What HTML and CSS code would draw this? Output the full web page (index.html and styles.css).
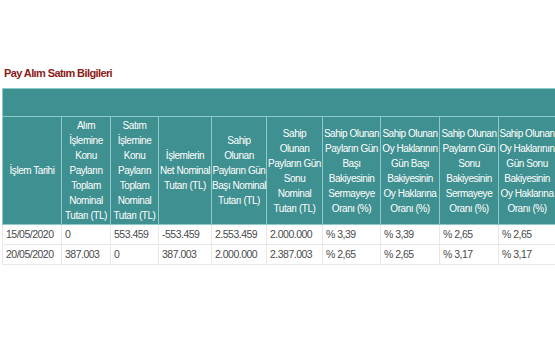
FILE: index.html
```
<!DOCTYPE html>
<html lang="tr">
<head>
    <meta charset="UTF-8">
    <meta name="viewport" content="width=device-width, initial-scale=1.0">
    <title>Pay Alım Satım Bilgileri</title>
    <link rel="stylesheet" href="styles.css">
</head>
<body>
    <div class="page">
        <h3 class="section-title">Pay Alım Satım Bilgileri</h3>
        <table class="trade-table">
            <colgroup>
                <col style="width:59px">
                <col style="width:49px">
                <col style="width:48px">
                <col style="width:53px">
                <col style="width:55px">
                <col style="width:56px">
                <col style="width:58px">
                <col style="width:59px">
                <col style="width:59px">
                <col style="width:57px">
            </colgroup>
            <thead>
                <tr class="band"><th colspan="10"></th></tr>
                <tr>
                    <th>İşlem Tarihi</th>
                    <th>Alım<br>İşlemine<br>Konu<br>Payların<br>Toplam<br>Nominal<br>Tutarı (TL)</th>
                    <th>Satım<br>İşlemine<br>Konu<br>Payların<br>Toplam<br>Nominal<br>Tutarı (TL)</th>
                    <th>İşlemlerin<br>Net Nominal<br>Tutarı (TL)</th>
                    <th>Sahip<br>Olunan<br>Payların Gün<br>Başı Nominal<br>Tutarı (TL)</th>
                    <th>Sahip<br>Olunan<br>Payların Gün<br>Sonu<br>Nominal<br>Tutarı (TL)</th>
                    <th>Sahip Olunan<br>Payların Gün<br>Başı<br>Bakiyesinin<br>Sermayeye<br>Oranı (%)</th>
                    <th>Sahip Olunan<br>Oy Haklarının<br>Gün Başı<br>Bakiyesinin<br>Oy Haklarına<br>Oranı (%)</th>
                    <th>Sahip Olunan<br>Payların Gün<br>Sonu<br>Bakiyesinin<br>Sermayeye<br>Oranı (%)</th>
                    <th>Sahip Olunan<br>Oy Haklarının<br>Gün Sonu<br>Bakiyesinin<br>Oy Haklarına<br>Oranı (%)</th>
                </tr>
            </thead>
            <tbody>
                <tr>
                    <td>15/05/2020</td>
                    <td>0</td>
                    <td>553.459</td>
                    <td>-553.459</td>
                    <td>2.553.459</td>
                    <td>2.000.000</td>
                    <td>% 3,39</td>
                    <td>% 3,39</td>
                    <td>% 2,65</td>
                    <td>% 2,65</td>
                </tr>
                <tr>
                    <td>20/05/2020</td>
                    <td>387.003</td>
                    <td>0</td>
                    <td>387.003</td>
                    <td>2.000.000</td>
                    <td>2.387.003</td>
                    <td>% 2,65</td>
                    <td>% 2,65</td>
                    <td>% 3,17</td>
                    <td>% 3,17</td>
                </tr>
            </tbody>
        </table>
    </div>
</body>
</html>
```

FILE: styles.css
```
body {
    margin: 0;
    padding: 0;
    background-color: #fff;
    font-family: "Liberation Sans", Arial, sans-serif;
    overflow: hidden;
}
.page {
    padding: 66px 0 0 2px;
}
.section-title {
    margin: 0 0 8px 2px;
    font-size: 11px;
    font-weight: bold;
    letter-spacing: -0.6px;
    color: #8b1a1a;
    line-height: 14px;
}
.trade-table {
    border-collapse: collapse;
    table-layout: fixed;
    width: 553px;
    font-size: 10.5px;
    letter-spacing: -0.5px;
}
.trade-table th {
    background-color: #3f9090;
    color: #fff;
    font-size: 10px;
    font-weight: normal;
    letter-spacing: -0.45px;
    text-align: center;
    line-height: 15px;
    padding: 1px 0;
    border: 1px solid #8fcaca;
    white-space: nowrap;
}
.trade-table .band th {
    height: 27px;
    padding: 0;
}
.trade-table td {
    color: #4a4a4a;
    line-height: 15px;
    padding: 2px 2px 2px 3px;
    border: 1px solid #e8e8e8;
    white-space: nowrap;
}
```
